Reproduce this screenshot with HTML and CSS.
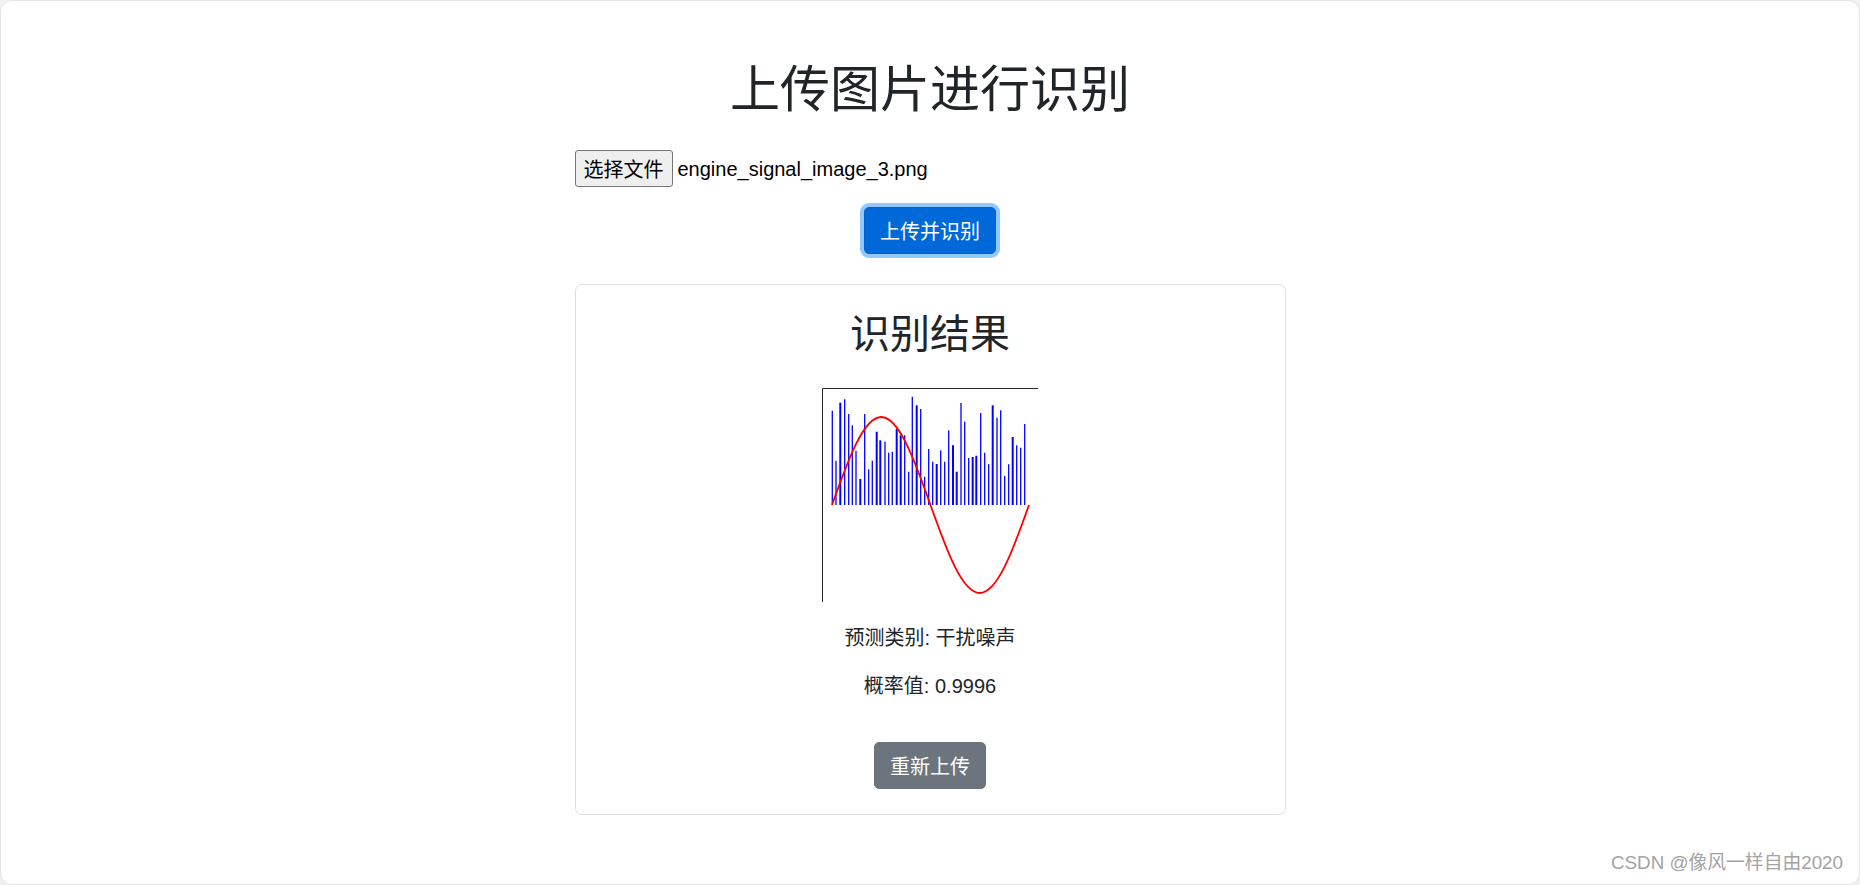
FILE: index.html
```html
<!DOCTYPE html>
<html lang="zh-CN">
<head>
<meta charset="utf-8">
<title>上传图片进行识别</title>
<link rel="stylesheet" href="styles.css">
</head>
<body>
<div class="frame">
  <div class="container">
    <h1 class="title">上传图片进行识别</h1>
    <div class="file-row">
      <button class="file-btn" type="button">选择文件</button>
      <span class="file-name">engine_signal_image_3.png</span>
    </div>
    <div class="submit-row">
      <button class="btn btn-primary" type="button">上传并识别</button>
    </div>
    <div class="card">
      <h2 class="card-title">识别结果</h2>
      <svg class="chart" width="216" height="214" viewBox="0 0 216 214" xmlns="http://www.w3.org/2000/svg">
        <g stroke="#0000ff" stroke-width="1.3">
          <line x1="10.3" y1="117" x2="10.3" y2="22.7"/>
          <line x1="14.0" y1="117" x2="14.0" y2="72.7"/>
          <line x1="18.3" y1="117" x2="18.3" y2="14.7" stroke-width="2"/>
          <line x1="22.7" y1="117" x2="22.7" y2="11.3"/>
          <line x1="26.7" y1="117" x2="26.7" y2="26"/>
          <line x1="30.3" y1="117" x2="30.3" y2="37.3"/>
          <line x1="34.0" y1="117" x2="34.0" y2="62.7"/>
          <line x1="38.3" y1="117" x2="38.3" y2="91" stroke-width="2"/>
          <line x1="42.7" y1="117" x2="42.7" y2="26"/>
          <line x1="46.7" y1="117" x2="46.7" y2="81.3"/>
          <line x1="50.3" y1="117" x2="50.3" y2="72.7"/>
          <line x1="54.7" y1="117" x2="54.7" y2="43.7" stroke-width="2"/>
          <line x1="58.3" y1="117" x2="58.3" y2="52.3" stroke-width="2"/>
          <line x1="63.0" y1="117" x2="63.0" y2="53.7"/>
          <line x1="66.7" y1="117" x2="66.7" y2="64.7"/>
          <line x1="70.3" y1="117" x2="70.3" y2="63.7"/>
          <line x1="74.7" y1="117" x2="74.7" y2="41" stroke-width="2"/>
          <line x1="78.7" y1="117" x2="78.7" y2="47.3" stroke-width="2"/>
          <line x1="82.7" y1="117" x2="82.7" y2="47.3"/>
          <line x1="86.7" y1="117" x2="86.7" y2="83.7"/>
          <line x1="90.3" y1="117" x2="90.3" y2="8.7"/>
          <line x1="94.7" y1="117" x2="94.7" y2="17.3" stroke-width="2"/>
          <line x1="98.7" y1="117" x2="98.7" y2="21"/>
          <line x1="102.7" y1="117" x2="102.7" y2="88.7"/>
          <line x1="106.7" y1="117" x2="106.7" y2="61"/>
          <line x1="110.7" y1="117" x2="110.7" y2="73.7"/>
          <line x1="114.7" y1="117" x2="114.7" y2="76" stroke-width="2"/>
          <line x1="118.7" y1="117" x2="118.7" y2="62.3"/>
          <line x1="122.7" y1="117" x2="122.7" y2="73.7"/>
          <line x1="126.7" y1="117" x2="126.7" y2="42.3"/>
          <line x1="131.0" y1="117" x2="131.0" y2="57.3" stroke-width="2"/>
          <line x1="134.7" y1="117" x2="134.7" y2="83.7" stroke-width="2"/>
          <line x1="139.0" y1="117" x2="139.0" y2="15"/>
          <line x1="142.7" y1="117" x2="142.7" y2="33.7"/>
          <line x1="146.7" y1="117" x2="146.7" y2="70"/>
          <line x1="150.7" y1="117" x2="150.7" y2="69" stroke-width="2"/>
          <line x1="154.3" y1="117" x2="154.3" y2="67.7" stroke-width="2"/>
          <line x1="158.7" y1="117" x2="158.7" y2="25"/>
          <line x1="162.7" y1="117" x2="162.7" y2="64.7"/>
          <line x1="166.7" y1="117" x2="166.7" y2="76.3"/>
          <line x1="170.7" y1="117" x2="170.7" y2="17.3" stroke-width="2"/>
          <line x1="175.0" y1="117" x2="175.0" y2="29.7"/>
          <line x1="178.7" y1="117" x2="178.7" y2="22.3"/>
          <line x1="182.7" y1="117" x2="182.7" y2="87.7"/>
          <line x1="186.7" y1="117" x2="186.7" y2="76.3"/>
          <line x1="190.7" y1="117" x2="190.7" y2="49" stroke-width="2"/>
          <line x1="194.7" y1="117" x2="194.7" y2="57.3"/>
          <line x1="198.7" y1="117" x2="198.7" y2="59.7"/>
          <line x1="202.7" y1="117" x2="202.7" y2="36"/>
        </g>
        <path d="M10 117 C26.06 71.92 41.42 29 59.25 29 S92.44 71.92 108.5 117 S139.92 205 157.75 205 S190.94 162.08 207 117" fill="none" stroke="#ff0000" stroke-width="1.8"/>
        <path d="M0.5 214 V0.5 H216" fill="none" stroke="#262626" stroke-width="1"/>
      </svg>
      <p class="result">预测类别: 干扰噪声</p>
      <p class="result">概率值: 0.9996</p>
      <div class="again-row">
        <button class="btn btn-secondary" type="button">重新上传</button>
      </div>
    </div>
  </div>
  <div class="watermark">CSDN @像风一样自由2020</div>
</div>
</body>
</html>
```

FILE: styles.css
```css
* {
  box-sizing: border-box;
}

html, body {
  margin: 0;
  padding: 0;
  background: #f1f1f1;
}

body {
  font-family: "Liberation Sans", "Noto Sans CJK SC", sans-serif;
  color: #212529;
  font-size: 20px;
  line-height: 1.5;
}

.frame {
  position: relative;
  height: 885px;
  background: #ffffff;
  border: 1px solid #e4e4e4;
  border-radius: 12px;
  overflow: hidden;
}

.container {
  width: 711px;
  margin: 0 auto;
  padding-top: 59px;
}

.title {
  margin: 0;
  font-size: 50px;
  line-height: 60px;
  font-weight: 400;
  text-align: center;
}

.file-row {
  display: flex;
  align-items: center;
  gap: 5px;
  margin-top: 30px;
}

.file-btn {
  height: 37px;
  width: 98px;
  padding: 0;
  font-family: "Liberation Sans", "Noto Sans CJK SC", sans-serif;
  font-size: 20px;
  color: #000000;
  background: #efefef;
  border: 1px solid #767676;
  border-radius: 3px;
}

.file-name {
  font-size: 20px;
  color: #000000;
}

.submit-row {
  display: flex;
  justify-content: center;
  margin-top: 20px;
}

.btn {
  height: 47px;
  padding: 0 15px;
  font-family: "Liberation Sans", "Noto Sans CJK SC", sans-serif;
  font-size: 20px;
  color: #ffffff;
  border-radius: 5px;
  border: 1px solid transparent;
}

.btn-primary {
  width: 132px;
  background: #0069d9;
  border-color: #0062cc;
  box-shadow: 0 0 0 4px rgba(38, 143, 255, 0.5);
}

.btn-secondary {
  width: 112px;
  background: #6c757d;
  border-color: #6c757d;
}

.card {
  margin-top: 30px;
  height: 531px;
  border: 1px solid #dfdfdf;
  border-radius: 7px;
  padding: 25px 25px 23px;
  text-align: center;
}

.card-title {
  margin: 0;
  font-size: 40px;
  line-height: 48px;
  font-weight: 400;
}

.chart {
  display: block;
  margin: 30px auto 0;
}

.result {
  margin: 21px 0 0;
  line-height: 30px;
}

.result + .result {
  margin-top: 18px;
}

.again-row {
  display: flex;
  justify-content: center;
  margin-top: 41px;
}

.watermark {
  position: absolute;
  right: 16px;
  bottom: 9px;
  font-size: 18.8px;
  line-height: 24px;
  color: #a3a3a3;
  text-shadow: 0 0 1px #ffffff;
}
```
